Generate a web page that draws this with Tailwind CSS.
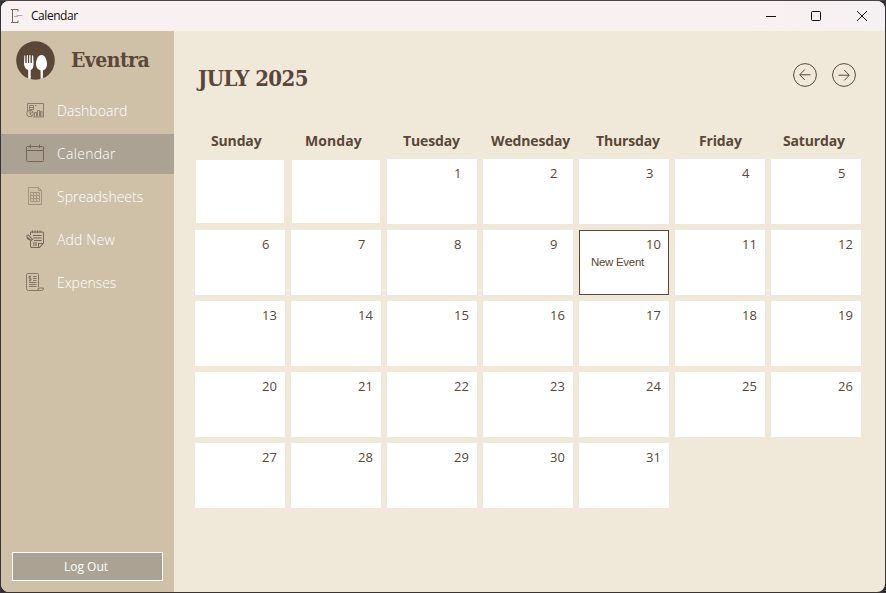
<!DOCTYPE html>
<html lang="en">
<head>
<meta charset="utf-8">
<title>Calendar</title>
<script src="https://cdn.jsdelivr.net/npm/@tailwindcss/browser@4"></script>
</head>
<body class="w-[886px] h-[593px] overflow-hidden bg-[#2e2a2d]">
<div class="w-full h-full border border-[#37333a] border-t-[#4a4446]">
<div class="w-full h-full rounded-[8px] overflow-hidden flex flex-col bg-[#f0e9da]">
  <header class="h-[30px] shrink-0 flex items-center bg-linear-to-r from-[#f9f0f1] from-85% to-[#f5f1f3]">
    <svg class="ml-[9px] w-[14px] h-[16px]" viewBox="0 0 14 16" fill="none" stroke="#766760"><path d="M1 1.500h7v2M1 14.500h7v-2M2.500 1.500v13" stroke-width="1"/><path d="M4 8.500h4M6.500 7.500h6" stroke="#b5a9a8"/></svg>
    <span class="ml-[7px] text-[12px] leading-4 tracking-[-0.45px] text-[#111] font-['Open_Sans',sans-serif]">Calendar</span>
    <svg class="ml-auto mr-[17px] w-[102px] h-[12px]" viewBox="0 0 102 12" fill="none" stroke="#111"><path d="M0 6.500h10"/><rect x="45.500" y="1.500" width="9" height="9" rx="1"/><path d="M91 1l10 10M101 1L91 11"/></svg>
  </header>
  <div class="flex-1 flex min-h-0">
    <aside class="w-[173px] shrink-0 bg-[#cfc1a8] flex flex-col font-['Open_Sans',sans-serif]">
      <div class="h-[60px] flex items-start pt-[10px] pl-[15px]">
        <svg class="w-[39px] h-[39px]" viewBox="0 0 39 39"><circle cx="19.500" cy="19.500" r="19.300" fill="#5a4738"/><g fill="#fff"><path d="M8.300 15Q8.700 13.500 9.300 15V22H10.700V14.500Q11.300 13.500 11.900 14.500V22H13.200V14.500Q13.900 13.500 14.500 14.500V22H15.900V15Q16.500 13.500 17.200 15L17.600 23Q17.500 28 14.700 29V37.800H12.200V29Q8.500 28 8 23Z"/><path d="M25.500 14C29 14 31 19 31 23Q31 28 26.900 29.500V37.200L24.600 38V29.500Q20 28 20 23C20 19 22 14 25.500 14Z"/></g></svg>
        <span class="ml-[16px] mt-[3px] text-[21px] leading-8 font-bold tracking-[-0.55px] text-[#5a4738] font-['DejaVu_Serif_Condensed','DejaVu_Serif',serif]">Eventra</span>
      </div>
      <nav class="flex flex-col gap-[3px] text-white text-[14px] font-light">
        <div class="h-[40px] flex items-center pl-[25px]">
          <svg class="w-[18px] h-[18px] mb-[2px]" viewBox="0 0 18 18" fill="none" stroke="#8d7e6c"><path d="M1.500 10V2.500h16v13.500H7M3.500 4.500h4v4h-4zM3.500 6.500h4M9 4.500h1.500M8.500 15.500v-4h2v4M11.500 15.500v-6h2v6M14.500 15.500v-5h1.500v5"/><circle cx="4" cy="12.500" r="3.300"/><path d="M4 9.500v3.500l3-2M4 13l2 2"/></svg>
          <span class="ml-[13px] mb-[1px] tracking-[0.05px]">Dashboard</span></div>
        <div class="h-[40px] flex items-center pl-[25px] bg-[#aba294]">
          <svg class="w-[18px] h-[18px] mb-[2px]" viewBox="0 0 18 18" fill="none" stroke="#75655a"><rect x=".500" y="2.500" width="17" height="15" rx="1"/><path d="M.5 6.500h17M4.500.5v3.500M13.500.5v3.500"/></svg>
          <span class="ml-[13px] mb-[1px] tracking-[0.3px]">Calendar</span></div>
        <div class="h-[40px] flex items-center pl-[25px]">
          <svg class="w-[18px] h-[18px] mb-[2px]" viewBox="0 0 18 18" fill="none" stroke="#a39480"><path d="M2.500.5h10l3 3v14h-13zM12.500.5v3h3"/><path d="M4.500 5.500h9v9h-9zM4.500 8.500h9M4.500 11.500h9M7.500 5.500v9M10.500 5.500v9"/></svg>
          <span class="ml-[13px] mb-[1px] tracking-[0px]">Spreadsheets</span></div>
        <div class="h-[40px] flex items-center pl-[25px]">
          <svg class="w-[18px] h-[18px] mb-[2px]" viewBox="0 0 18 18" fill="none" stroke="#78685a" stroke-width="1.050"><path d="M4.500 5V3q0-1 1-1h11q1 0 1 1v10l-4 4.500h-8q-1 0-1-1V10M12.500 17v-3.500h4.500M6.500.5v2.500M9 .5v2.500M11.500.5v2.500M14 .5v2.500M7 5.500h8.500M7 8h8.500M8 10.500h7.500M7 13h4M7 15h4M.5 5.500l2-.5 4 4.500-1.500 1L.5 6.500M1 8.500l4 2"/></svg>
          <span class="ml-[13px] mb-[1px] tracking-[0.15px]">Add New</span></div>
        <div class="h-[40px] flex items-center pl-[25px]">
          <svg class="w-[18px] h-[18px] mb-[2px]" viewBox="0 0 18 18" fill="none" stroke="#857666"><path d="M12.500 14V1.500q0-1-1-1h-10q-1 0-1 1v14q0 2 2 2h13q2 0 2-2.500h-5q0 2.500-2 2.500M5 3.500H3v2h2v2H3M4 2.500v6M7 3.500h3.500M7 5.500h3.500M7 7.500h3.500M3 9.500h7.500M3 11.500h7.500M3 13.500h7.500"/></svg>
          <span class="ml-[13px] mb-[1px] tracking-[-0.05px]">Expenses</span></div>
      </nav>
      <button class="mt-auto mb-[11px] ml-[11px] w-[151px] h-[29px] border border-white bg-[#aba294] text-white text-[12px] pr-[3px]">Log Out</button>
    </aside>
    <main class="flex-1 text-[#5a4738] font-['Open_Sans',sans-serif]">
      <div class="h-[97px] pl-[24px] pr-[29px] flex items-start">
        <h1 class="mt-[31px] text-[22px] leading-8 font-bold tracking-[-0.6px] font-['DejaVu_Serif_Condensed','DejaVu_Serif',serif]">JULY 2025</h1>
        <svg class="ml-auto mt-[32px] w-[24px] h-[24px]" viewBox="0 0 24 24" fill="none" stroke="#5a4738"><circle cx="12" cy="12" r="11.400"/><path d="M17.500 11.800H7M11.800 6.500L6.700 11.800L11.800 17"/></svg>
        <svg class="ml-[15px] mt-[32px] w-[24px] h-[24px]" viewBox="0 0 24 24" fill="none" stroke="#5a4738"><circle cx="12" cy="12" r="11.400"/><path d="M6.500 12.200H17M12.200 7L17.300 12.200L12.200 17.500"/></svg>
      </div>
      <div class="h-[31px] pl-[37px] flex text-[14px] leading-[26px] font-bold tracking-[-0.15px]">
        <span class="w-[94px]">Sunday</span><span class="w-[98px] tracking-[0.05px]">Monday</span><span class="w-[88px]">Tuesday</span><span class="w-[105px]">Wednesday</span><span class="w-[103px]">Thursday</span><span class="w-[84px]">Friday</span><span>Saturday</span>
      </div>
      <div id="days" class="ml-[21px] grid grid-cols-[repeat(7,90px)] auto-rows-[65px] gap-[6px] text-[13px] leading-[18px]">
        <div class="bg-white m-px"></div>
        <div class="bg-white m-px"></div>
      </div>
    </main>
  </div>
</div>
</div>
<script>
const grid = document.getElementById('days');
for (let d = 1; d <= 31; d++) {
  const cell = document.createElement('div');
  cell.className = d === 10 ? 'bg-white border border-[#5a4738] pt-[4px] pl-[66px]' : 'bg-white pt-[5px] pl-[67px]';
  cell.textContent = d;
  if (d === 10) {
    const ev = document.createElement('div');
    ev.className = "-ml-[55px] text-[11.5px] leading-[18px] whitespace-nowrap font-['Liberation_Sans',sans-serif] tracking-[-0.3px]";
    ev.textContent = 'New Event';
    cell.append(ev);
  }
  grid.append(cell);
}
</script>
</body>
</html>
